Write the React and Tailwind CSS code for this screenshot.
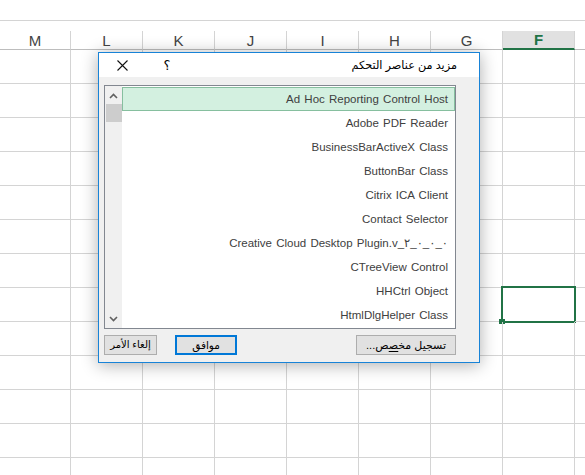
import React from 'react';

const columns = ['M', 'L', 'K', 'J', 'I', 'H', 'G', 'F', 'E'];

const controls = [
  'Ad Hoc Reporting Control Host',
  'Adobe PDF Reader',
  'BusinessBarActiveX Class',
  'ButtonBar Class',
  'Citrix ICA Client',
  'Contact Selector',
  'Creative Cloud Desktop Plugin.v_٢_٠_٠_٠',
  'CTreeView Control',
  'HHCtrl Object',
  'HtmlDlgHelper Class',
];

// column widths in px, left to right (sheet is right-to-left, so M is first)
const colWidth = (i) => (i === 0 ? 'w-[71px]' : i === 8 ? 'w-[11px]' : 'w-[72px]');

function HeaderRow() {
  return (
    <div className="flex h-[19px]">
      {columns.map((c, i) => {
        const active = c === 'F';
        return (
          <div
            key={c}
            className={
              'shrink-0 flex items-center justify-center text-[15px] leading-none ' +
              colWidth(i) +
              (i < 8 ? ' border-r border-[#d4d4d4]' : '') +
              (active
                ? ' bg-[#e1e1e1] border-b-2 border-b-[#217346] text-[#217346] font-bold'
                : ' border-b border-b-[#bdbdbd] text-[#444]')
            }
          >
            {i < 8 ? c : ''}
          </div>
        );
      })}
    </div>
  );
}

function SheetRow({ index }) {
  return (
    <div className="flex h-[34px]">
      {columns.map((c, i) => (
        <div
          key={c}
          className={
            'relative shrink-0 border-b border-[#d4d4d4] ' +
            colWidth(i) +
            (i < 8 ? ' border-r' : '')
          }
        >
          {index === 7 && c === 'F' && (
            <div className="absolute left-[-2px] top-[-2px] w-[75px] h-[37px] border-2 border-[#217346]">
              <div className="absolute left-[-4px] bottom-[-3px] w-[6px] h-[5px] bg-[#217346]" />
            </div>
          )}
        </div>
      ))}
    </div>
  );
}

function Chevron({ up }) {
  return (
    <svg width="9" height="6" viewBox="0 0 9 6" className="block">
      <path
        d={up ? 'M1 5 L4.5 1.5 L8 5' : 'M1 1 L4.5 4.5 L8 1'}
        fill="none"
        stroke="#606060"
        strokeWidth="1.6"
      />
    </svg>
  );
}

function Button({ children, primary, className }) {
  return (
    <button
      className={
        'h-[20px] bg-[#e1e1e1] text-black leading-none flex items-center justify-center ' +
        (primary ? 'border-2 border-[#0078d7] ' : 'border border-[#adadad] ') +
        className
      }
    >
      {children}
    </button>
  );
}

function MoreControlsDialog() {
  return (
    <div
      dir="rtl"
      className="absolute left-[98px] top-[52px] w-[382px] h-[311px] flex flex-col border border-[#1883d7] bg-[#f0f0f0] shadow-[0_2px_16px_rgba(0,0,0,0.32)]"
    >
      {/* title bar */}
      <div className="h-[24px] shrink-0 bg-white flex items-center pr-[22px]">
        <span className="text-[11.25px] text-black pt-[1px]">مزيد من عناصر التحكم</span>
        <span className="mr-auto w-[10px] text-center text-[13px] text-black leading-none">؟</span>
        <svg width="11" height="11" viewBox="0 0 11 11" className="mr-[34px] ml-[18px]">
          <path d="M0.5 0.5 L10.5 10.5 M10.5 0.5 L0.5 10.5" stroke="#111" strokeWidth="1.1" />
        </svg>
      </div>

      {/* list box */}
      <div className="mt-[8px] mr-[23px] ml-[5px] h-[244px] flex border border-[#828790] bg-white">
        <div className="flex-1 py-[1px]">
          {controls.map((name, i) => (
            <div
              key={name}
              className={
                'h-[24px] flex items-center pr-[6px] pt-[2px] text-[11.5px] text-[#404040] [word-spacing:1px] ' +
                (i === 0 ? 'bg-[#d3f0e0] border border-[#86bf9f]' : 'border border-transparent')
              }
            >
              <bdo dir="ltr">{name}</bdo>
            </div>
          ))}
        </div>
        <div className="w-[17px] shrink-0 bg-[#f0f0f0] flex flex-col items-center">
          <div className="h-[18px] flex items-center justify-center pt-[1px]">
            <Chevron up />
          </div>
          <div className="w-[16px] h-[18px] bg-[#cdcdcd]" />
          <div className="flex-1" />
          <div className="h-[18px] flex items-center justify-center">
            <Chevron />
          </div>
        </div>
      </div>

      {/* buttons */}
      <div className="mt-[6px] mr-[23px] ml-[5px] flex items-center">
        <Button className="w-[100px] text-[11px]">
          <span>
            تسجيل مخ<u className="underline-offset-2">ص</u>ص...
          </span>
        </Button>
        <Button primary className="mr-auto w-[62px] text-[10.5px]">موافق</Button>
        <Button className="mr-[18px] w-[53px] text-[10px]">إلغاء الأمر</Button>
      </div>
    </div>
  );
}

export default function App() {
  return (
    <div
      className="relative w-[585px] h-[475px] overflow-hidden bg-white"
      style={{ fontFamily: '"Liberation Sans", "DejaVu Sans", sans-serif' }}
    >
      <div className="h-[21px] border-b border-[#d4d4d4]" />
      <div className="h-[10px]" />
      <HeaderRow />
      {Array.from({ length: 13 }).map((_, i) => (
        <SheetRow key={i} index={i} />
      ))}
      <MoreControlsDialog />
    </div>
  );
}
